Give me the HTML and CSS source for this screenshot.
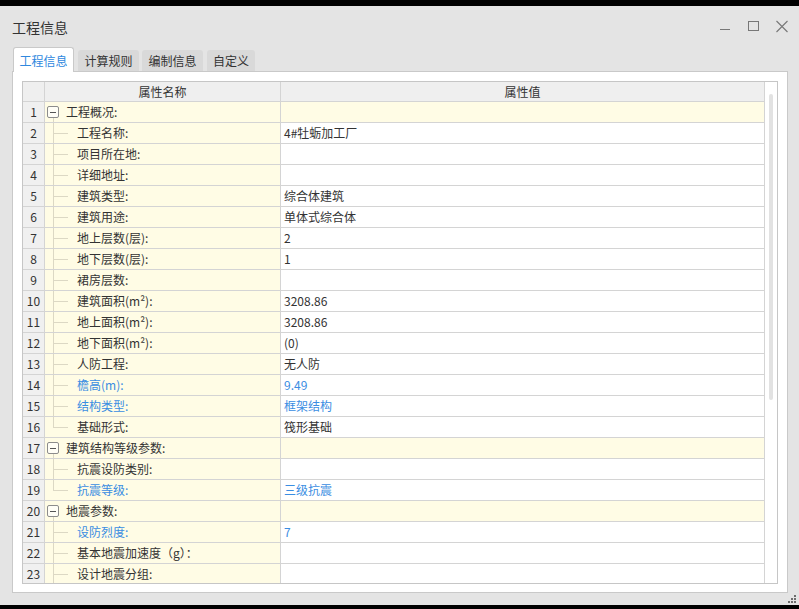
FILE: index.html
```html
<!DOCTYPE html>
<html lang="zh-CN">
<head>
<meta charset="utf-8">
<title>工程信息</title>
<link rel="stylesheet" href="styles.css">
</head>
<body>
<div class="window">
  <div class="titlebar">
    <span class="title">工程信息</span>
    <div class="controls">
      <svg class="ctl" width="13" height="13" viewBox="0 0 13 13"><path d="M1 9.5H11" stroke="#777" stroke-width="1" fill="none"/></svg>
      <svg class="ctl ctl-max" width="13" height="13" viewBox="0 0 13 13"><rect x="0.5" y="1.5" width="10" height="9" stroke="#777" stroke-width="1" fill="none"/></svg>
      <svg class="ctl ctl-close" width="13" height="13" viewBox="0 0 13 13"><path d="M0.5 1L11.5 12M11.5 1L0.5 12" stroke="#777" stroke-width="1.1" fill="none"/></svg>
    </div>
  </div>
  <div class="tabs">
    <div class="tab active">工程信息</div>
    <div class="tab">计算规则</div>
    <div class="tab">编制信息</div>
    <div class="tab small">自定义</div>
  </div>
  <div class="panel">
    <div class="grid">
      <div class="table">
        <div class="row head">
          <div class="cell num"></div>
          <div class="cell hname">属性名称</div>
          <div class="cell hval">属性值</div>
        </div>

        <div class="row group">
          <div class="cell num">1</div>
          <div class="cell name gname"><span class="toggle"><span class="dash"></span></span><span class="gtext">工程概况:</span></div>
          <div class="cell val"></div>
        </div>
        <div class="row">
          <div class="cell num">2</div>
          <div class="cell name"><span class="branch"></span><span class="ctext">工程名称:</span></div>
          <div class="cell val">4#牡蛎加工厂</div>
        </div>
        <div class="row">
          <div class="cell num">3</div>
          <div class="cell name"><span class="branch"></span><span class="ctext">项目所在地:</span></div>
          <div class="cell val"></div>
        </div>
        <div class="row">
          <div class="cell num">4</div>
          <div class="cell name"><span class="branch"></span><span class="ctext">详细地址:</span></div>
          <div class="cell val"></div>
        </div>
        <div class="row">
          <div class="cell num">5</div>
          <div class="cell name"><span class="branch"></span><span class="ctext">建筑类型:</span></div>
          <div class="cell val">综合体建筑</div>
        </div>
        <div class="row">
          <div class="cell num">6</div>
          <div class="cell name"><span class="branch"></span><span class="ctext">建筑用途:</span></div>
          <div class="cell val">单体式综合体</div>
        </div>
        <div class="row">
          <div class="cell num">7</div>
          <div class="cell name"><span class="branch"></span><span class="ctext">地上层数(层):</span></div>
          <div class="cell val">2</div>
        </div>
        <div class="row">
          <div class="cell num">8</div>
          <div class="cell name"><span class="branch"></span><span class="ctext">地下层数(层):</span></div>
          <div class="cell val">1</div>
        </div>
        <div class="row">
          <div class="cell num">9</div>
          <div class="cell name"><span class="branch"></span><span class="ctext">裙房层数:</span></div>
          <div class="cell val"></div>
        </div>
        <div class="row">
          <div class="cell num">10</div>
          <div class="cell name"><span class="branch"></span><span class="ctext">建筑面积(m²):</span></div>
          <div class="cell val">3208.86</div>
        </div>
        <div class="row">
          <div class="cell num">11</div>
          <div class="cell name"><span class="branch"></span><span class="ctext">地上面积(m²):</span></div>
          <div class="cell val">3208.86</div>
        </div>
        <div class="row">
          <div class="cell num">12</div>
          <div class="cell name"><span class="branch"></span><span class="ctext">地下面积(m²):</span></div>
          <div class="cell val">(0)</div>
        </div>
        <div class="row">
          <div class="cell num">13</div>
          <div class="cell name"><span class="branch"></span><span class="ctext">人防工程:</span></div>
          <div class="cell val">无人防</div>
        </div>
        <div class="row blue">
          <div class="cell num">14</div>
          <div class="cell name"><span class="branch"></span><span class="ctext">檐高(m):</span></div>
          <div class="cell val">9.49</div>
        </div>
        <div class="row blue">
          <div class="cell num">15</div>
          <div class="cell name"><span class="branch"></span><span class="ctext">结构类型:</span></div>
          <div class="cell val">框架结构</div>
        </div>
        <div class="row">
          <div class="cell num">16</div>
          <div class="cell name"><span class="branch last"></span><span class="ctext">基础形式:</span></div>
          <div class="cell val">筏形基础</div>
        </div>

        <div class="row group">
          <div class="cell num">17</div>
          <div class="cell name gname"><span class="toggle"><span class="dash"></span></span><span class="gtext">建筑结构等级参数:</span></div>
          <div class="cell val"></div>
        </div>
        <div class="row">
          <div class="cell num">18</div>
          <div class="cell name"><span class="branch"></span><span class="ctext">抗震设防类别:</span></div>
          <div class="cell val"></div>
        </div>
        <div class="row blue">
          <div class="cell num">19</div>
          <div class="cell name"><span class="branch last"></span><span class="ctext">抗震等级:</span></div>
          <div class="cell val">三级抗震</div>
        </div>

        <div class="row group">
          <div class="cell num">20</div>
          <div class="cell name gname"><span class="toggle"><span class="dash"></span></span><span class="gtext">地震参数:</span></div>
          <div class="cell val"></div>
        </div>
        <div class="row blue">
          <div class="cell num">21</div>
          <div class="cell name"><span class="branch"></span><span class="ctext">设防烈度:</span></div>
          <div class="cell val">7</div>
        </div>
        <div class="row">
          <div class="cell num">22</div>
          <div class="cell name"><span class="branch"></span><span class="ctext">基本地震加速度（g）：</span></div>
          <div class="cell val"></div>
        </div>
        <div class="row">
          <div class="cell num">23</div>
          <div class="cell name"><span class="branch"></span><span class="ctext">设计地震分组:</span></div>
          <div class="cell val"></div>
        </div>
      </div>
      <div class="vscroll"><div class="thumb"></div></div>
    </div>
  </div>
  <div class="footer">
    <svg class="grip" width="10" height="9" viewBox="0 0 10 9">
      <rect x="7" y="0" width="2" height="2" fill="#6d6d6d"/>
      <rect x="4" y="3" width="2" height="2" fill="#6d6d6d"/>
      <rect x="7" y="3" width="2" height="2" fill="#6d6d6d"/>
      <rect x="1" y="6" width="2" height="2" fill="#6d6d6d"/>
      <rect x="4" y="6" width="2" height="2" fill="#6d6d6d"/>
      <rect x="7" y="6" width="2" height="2" fill="#6d6d6d"/>
    </svg>
  </div>
</div>
</body>
</html>
```

FILE: styles.css
```css
* { box-sizing: border-box; }

html, body {
  margin: 0;
  padding: 0;
  background: #000;
  height: 609px;
  overflow: hidden;
}

body {
  font-family: "Noto Sans CJK SC", "Microsoft YaHei", "Noto Sans", sans-serif;
  font-size: 12px;
  color: #333;
  padding-top: 6px;
}

.window {
  width: 799px;
  height: 599px;
  background: #e4e4e4;
  display: flex;
  flex-direction: column;
}

.titlebar {
  height: 40px;
  flex: none;
  display: flex;
  align-items: center;
  justify-content: space-between;
  padding: 0 10px 0 12px;
}

.title {
  font-size: 14px;
  color: #333;
  line-height: 1;
  padding-top: 1px;
}

.controls {
  display: flex;
  align-items: center;
  padding-top: 0;
}

.ctl { display: block; }
.ctl-max { margin-left: 16px; }
.ctl-close { margin-left: 15px; }

.tabs {
  height: 25px;
  flex: none;
  display: flex;
  align-items: flex-end;
  padding-left: 13px;
}

.tab {
  width: 61px;
  height: 21px;
  margin-left: 3px;
  background: #d9d9d9;
  border-radius: 3px 3px 0 0;
  display: flex;
  align-items: center;
  justify-content: center;
  color: #333;
  font-size: 12px;
  line-height: 1;
}

.tab.small { width: 48px; margin-left: 4px; }

.tab.active {
  margin-left: 0;
  margin-right: 1px;
  height: 25px;
  margin-bottom: -1px;
  background: #fff;
  border: 1px solid #c9c9c9;
  border-bottom: none;
  color: #2f88de;
  position: relative;
  z-index: 1;
  padding-top: 1px;
}

.panel {
  margin-left: 12px;
  width: 776px;
  height: 522px;
  flex: none;
  background: #fff;
  border: 1px solid #c9c9c9;
  padding: 9px 9px 0 9px;
}

.grid {
  width: 756px;
  height: 503px;
  border: 1px solid #c6c6c6;
  display: flex;
  overflow: hidden;
}

.table {
  width: 742px;
  flex: none;
  overflow: hidden;
}

.row {
  display: grid;
  grid-template-columns: 22px 236px 484px;
  height: 21px;
}

.cell {
  border-right: 1px solid #d4d4d4;
  border-bottom: 1px solid #d4d4d4;
  display: flex;
  align-items: center;
  white-space: nowrap;
  line-height: 1;
  overflow: hidden;
}

.row.head { height: 20px; }
.row.head .cell { background: #efefef; justify-content: center; color: #333; }

.num {
  background: #f0f0f0;
  justify-content: center;
  color: #333;
}

.name {
  background: #fffce5;
}

.val {
  background: #fff;
  padding-left: 3px;
}

.row.group .val { background: #fffce5; }

.row.blue .ctext,
.row.blue .val { color: #3a8de2; }

.gname {
  background:
    linear-gradient(#dcd8c4, #dcd8c4) 8px 15px / 1px 100% no-repeat,
    #fffce5;
}

.toggle {
  width: 12px;
  height: 12px;
  margin-left: 2px;
  border: 1px solid #8c8c8c;
  border-radius: 2px;
  background: #fffef6;
  display: flex;
  align-items: center;
  justify-content: center;
  flex: none;
}

.dash {
  width: 6px;
  height: 1px;
  background: #555;
}

.gtext { margin-left: 7px; }

.branch {
  width: 24px;
  align-self: stretch;
  flex: none;
  background:
    linear-gradient(#dcd8c4, #dcd8c4) 8px 0 / 1px 100% no-repeat,
    linear-gradient(#dcd8c4, #dcd8c4) 9px 10px / 14px 1px no-repeat;
}

.branch.last {
  background:
    linear-gradient(#dcd8c4, #dcd8c4) 8px 0 / 1px 11px no-repeat,
    linear-gradient(#dcd8c4, #dcd8c4) 9px 10px / 14px 1px no-repeat;
}

.ctext { margin-left: 8px; }

.vscroll {
  width: 12px;
  flex: none;
  background: #fff;
  padding: 12px 0 0 4px;
}

.thumb {
  width: 4px;
  height: 306px;
  background: #e2e2e2;
  border-radius: 2px;
}

.footer {
  flex: 1;
  display: flex;
  justify-content: flex-end;
  align-items: flex-start;
  padding: 2px 2px 0 0;
}

.grip { display: block; }
```
